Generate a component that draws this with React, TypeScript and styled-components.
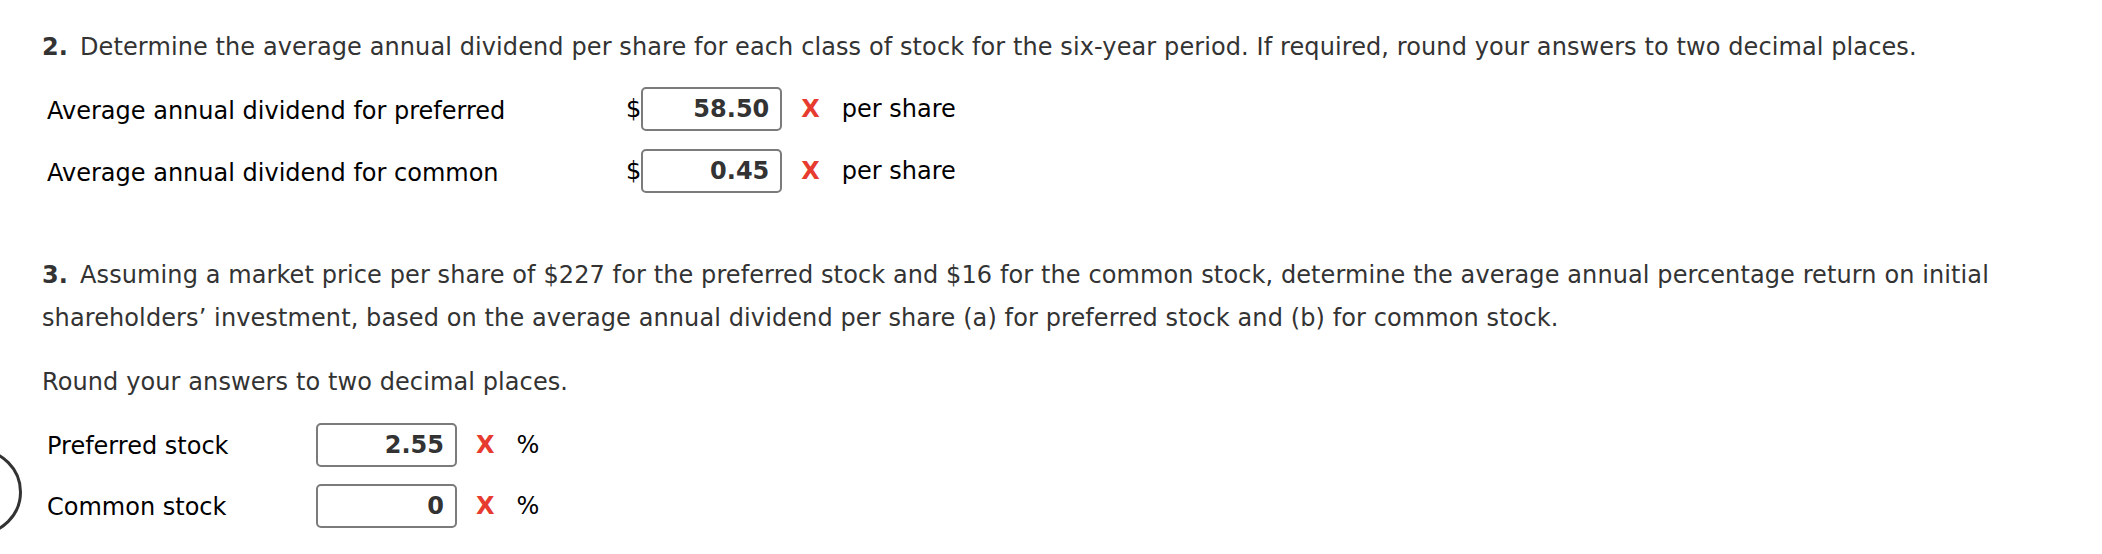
import { Fragment } from 'react'
import styled, { createGlobalStyle } from 'styled-components'

const GlobalStyle = createGlobalStyle`
  html, body {
    margin: 0;
    padding: 0;
    background: #fff;
  }
  body {
    font-family: "DejaVu Sans", Verdana, Tahoma, sans-serif;
    font-size: 24px;
    color: #333;
    overflow: hidden;
  }
`

const Page = styled.div`
  position: relative;
  width: 2102px;
  height: 554px;
  padding: 26px 0 0 42px;
  box-sizing: border-box;
`

const Question = styled.p<{ $gap?: number }>`
  margin: 0;
  margin-top: ${(p) => p.$gap || 0}px;
  line-height: 43px;
  letter-spacing: 0.1px;
  color: #333;
  max-width: 2000px;
`

const Num = styled.strong`
  font-weight: bold;
  padding-right: 12px;
`

const AnswerTable = styled.div<{ $labelWidth: number; $rowHeight: number; $gap: number }>`
  display: grid;
  grid-template-columns: ${(p) => p.$labelWidth}px auto auto auto auto;
  grid-auto-rows: ${(p) => p.$rowHeight}px;
  justify-content: start;
  align-items: center;
  justify-items: start;
  margin-top: ${(p) => p.$gap}px;
  padding-left: 5px;
`

const Label = styled.div`
  color: #000;
  padding-top: 3px;
`

const Currency = styled.span`
  color: #000;
  justify-self: end;
`

const ValueBox = styled.div`
  width: 141px;
  height: 44px;
  box-sizing: border-box;
  border: 2px solid #7b7b7b;
  border-radius: 5px;
  background: #fff;
  padding-right: 11px;
  display: flex;
  align-items: center;
  justify-content: flex-end;
  font-weight: bold;
  color: #333;
`

const Wrong = styled.span`
  color: #e63b2e;
  font-weight: bold;
  margin-left: 19px;
`

const Unit = styled.span`
  color: #000;
  margin-left: 22px;
`

const Ring = styled.div`
  position: absolute;
  left: -64px;
  top: 449px;
  width: 86px;
  height: 86px;
  box-sizing: border-box;
  border: 3px solid #333;
  border-radius: 50%;
`

const dividends = [
  { label: 'Average annual dividend for preferred', value: '58.50' },
  { label: 'Average annual dividend for common', value: '0.45' },
]

const returns = [
  { label: 'Preferred stock', value: '2.55' },
  { label: 'Common stock', value: '0' },
]

export default function App() {
  return (
    <>
      <GlobalStyle />
      <Page>
        <Question>
          <Num>2.</Num>Determine the average annual dividend per share for each class of stock for the
          six-year period. If required, round your answers to two decimal places.
        </Question>
        <AnswerTable $labelWidth={579} $rowHeight={62} $gap={9}>
          {dividends.map((d) => (
            <Fragment key={d.label}>
              <Label>{d.label}</Label>
              <Currency>$</Currency>
              <ValueBox>{d.value}</ValueBox>
              <Wrong>X</Wrong>
              <Unit>per share</Unit>
            </Fragment>
          ))}
        </AnswerTable>

        <Question $gap={52}>
          <Num>3.</Num>Assuming a market price per share of $227 for the preferred stock and $16 for the
          common stock, determine the average annual percentage return on initial shareholders’
          investment, based on the average annual dividend per share (a) for preferred stock and (b)
          for common stock.
        </Question>
        <Question $gap={21}>Round your answers to two decimal places.</Question>
        <AnswerTable $labelWidth={269} $rowHeight={61} $gap={10}>
          {returns.map((r) => (
            <Fragment key={r.label}>
              <Label>{r.label}</Label>
              <span />
              <ValueBox>{r.value}</ValueBox>
              <Wrong>X</Wrong>
              <Unit>%</Unit>
            </Fragment>
          ))}
        </AnswerTable>
        <Ring />
      </Page>
    </>
  )
}
